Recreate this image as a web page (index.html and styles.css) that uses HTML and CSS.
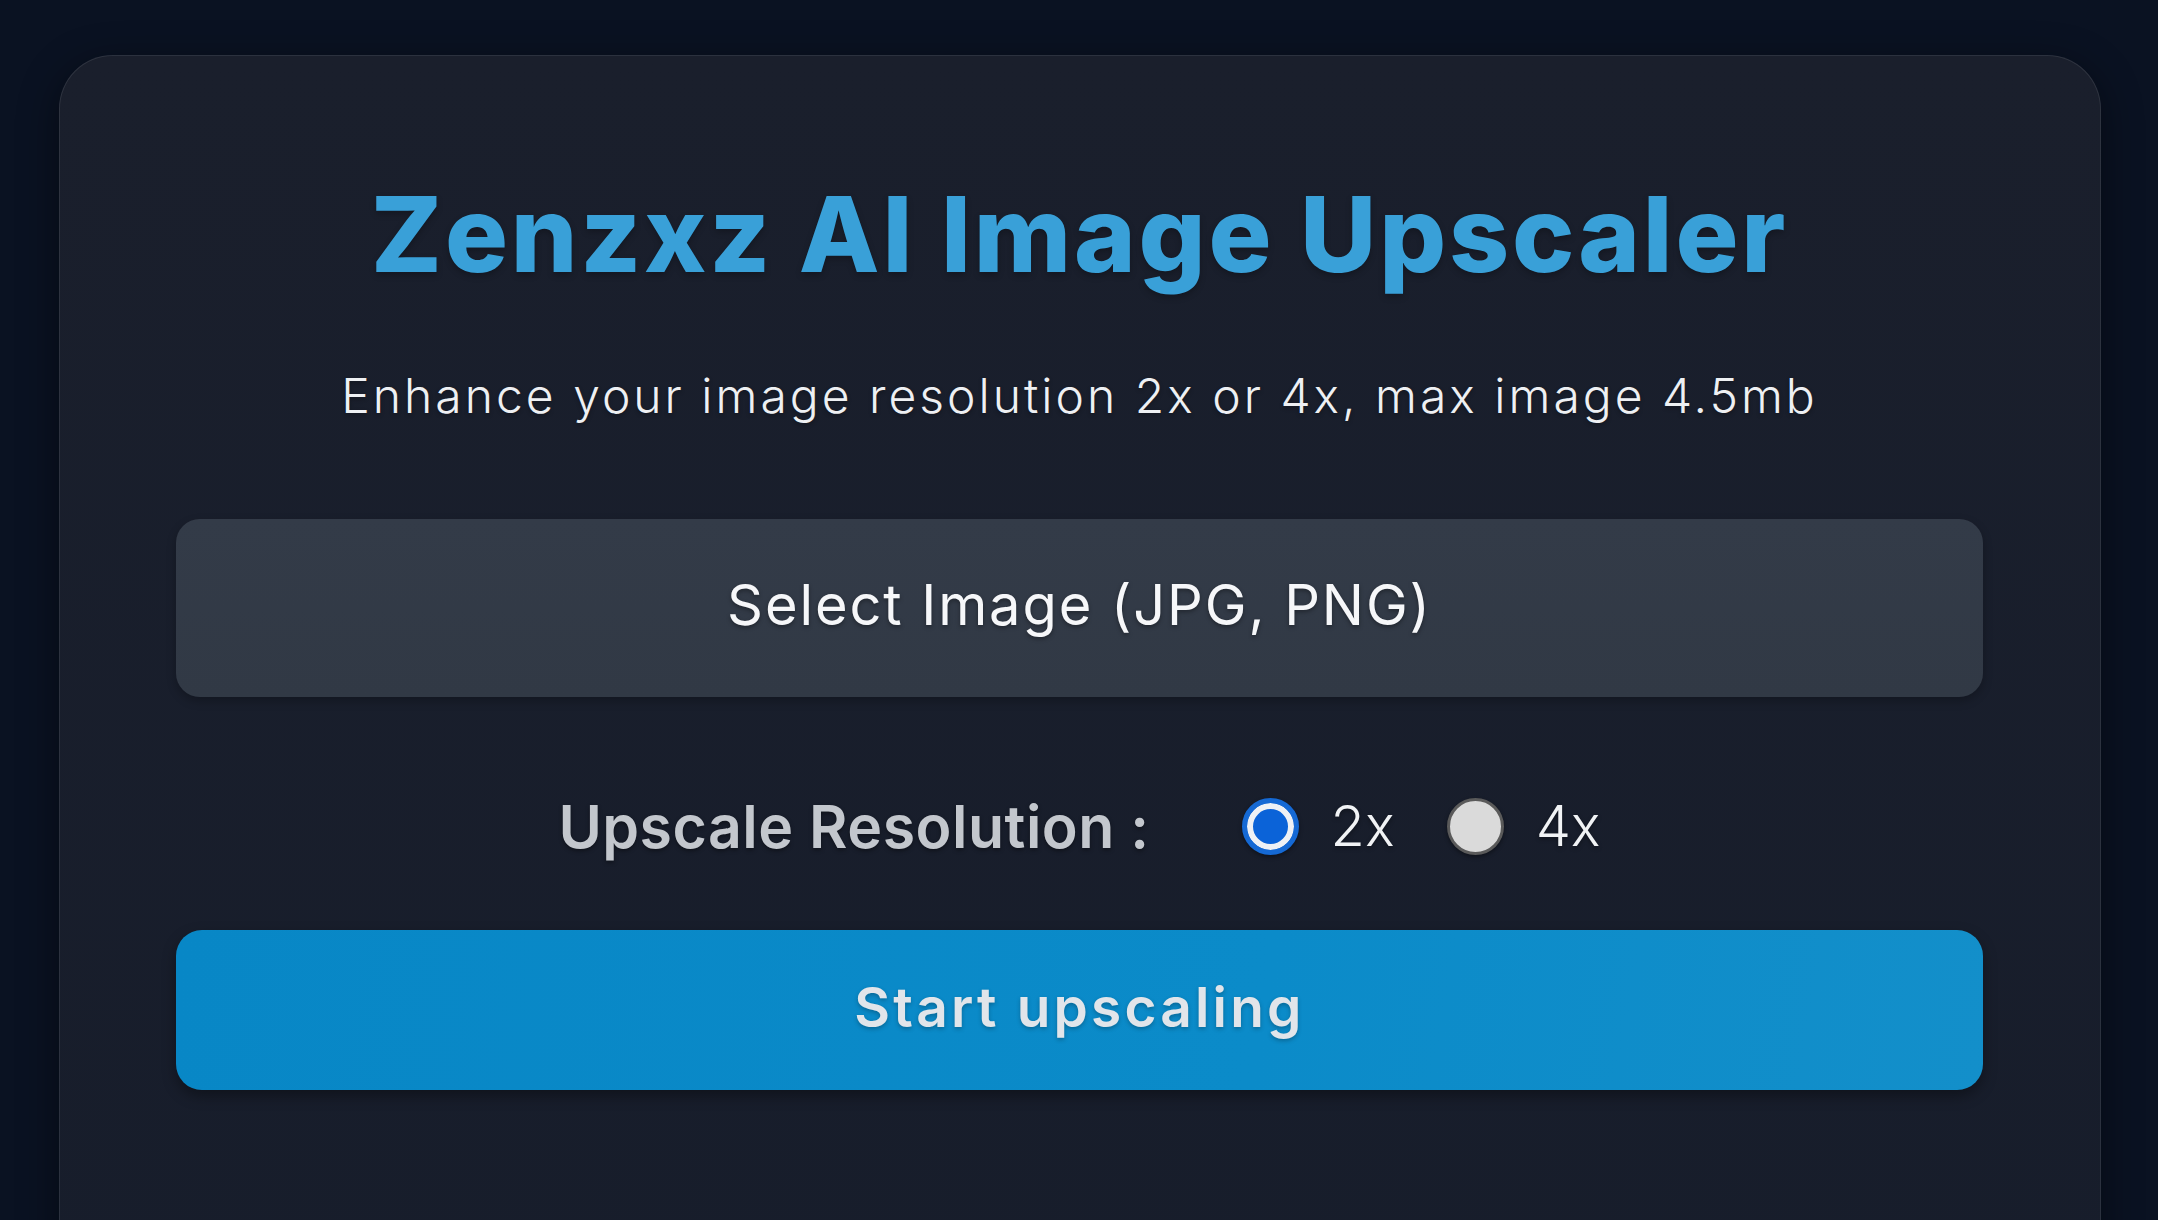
FILE: index.html
```html
<!DOCTYPE html>
<html lang="en">
<head>
<meta charset="utf-8">
<title>Zenzxz AI Image Upscaler</title>
<link rel="stylesheet" href="styles.css">
</head>
<body>
<main class="card">
  <h1 class="title">Zenzxz AI Image Upscaler</h1>
  <p class="subtitle">Enhance your image resolution 2x or 4x, max image 4.5mb</p>
  <label class="select-box">
    <span class="select-text">Select Image (JPG, PNG)</span>
  </label>
  <div class="res-row">
    <span class="res-label">Upscale Resolution :</span>
    <label class="opt">
      <input class="radio" type="radio" name="scale" value="2" checked>
      <span class="opt-text">2x</span>
    </label>
    <label class="opt">
      <input class="radio" type="radio" name="scale" value="4">
      <span class="opt-text">4x</span>
    </label>
  </div>
  <button class="start-btn" type="button">Start upscaling</button>
</main>
</body>
</html>
```

FILE: styles.css
```css
html, body {
  margin: 0;
  padding: 0;
  height: 100%;
  overflow: hidden;
}
body {
  background: #0a1222;
  font-family: "Inter", "Noto Sans", sans-serif;
  color: #f1f3f6;
}
.card {
  margin: 55px 57px 0 59px;
  height: 1300px;
  box-sizing: border-box;
  background: linear-gradient(180deg, #1a1f2c 0%, #171d2b 100%);
  border: 1px solid rgba(255, 255, 255, 0.09);
  border-radius: 54px;
  box-shadow: 0 10px 40px rgba(0, 0, 0, 0.45);
  padding: 115px 117px 0 116px;
  display: flex;
  flex-direction: column;
  align-items: stretch;
}
.title {
  margin: 0;
  text-align: center;
  font-size: 105px;
  line-height: 126px;
  font-weight: 800;
  color: #39a0d8;
  letter-spacing: 2.8px;
  text-shadow: 0 3px 6px rgba(0, 0, 0, 0.25);
}
.subtitle {
  margin: 68px 0 0;
  text-align: center;
  font-size: 48px;
  line-height: 62px;
  font-weight: 300;
  color: #eef0f3;
  letter-spacing: 3px;
  text-shadow: 0 2px 4px rgba(0, 0, 0, 0.3);
}
.select-box {
  margin-top: 92px;
  height: 178px;
  border-radius: 24px;
  background: linear-gradient(180deg, #333b48 0%, #313945 100%);
  box-shadow: 0 4px 10px rgba(0, 0, 0, 0.25);
  display: flex;
  align-items: center;
  justify-content: center;
}
.select-text {
  font-size: 56px;
  font-weight: 400;
  color: #f6f7f9;
  letter-spacing: 1.9px;
  text-shadow: 0 2px 4px rgba(0, 0, 0, 0.35);
  padding-bottom: 6px;
}
.res-row {
  margin-top: 89px;
  height: 80px;
  display: flex;
  align-items: center;
  justify-content: center;
}
.res-label {
  font-size: 59px;
  font-weight: 600;
  color: #c3c7cd;
  margin-right: 92px;
  text-shadow: 0 2px 4px rgba(0, 0, 0, 0.4);
  letter-spacing: 0.5px;
}
.opt {
  display: flex;
  align-items: center;
  gap: 32px;
}
.opt + .opt {
  margin-left: 52px;
}
.radio {
  appearance: none;
  -webkit-appearance: none;
  margin: 0;
  width: 57px;
  height: 57px;
  border-radius: 50%;
  box-sizing: border-box;
  background: #dadada;
  border: 3px solid #5a5a5a;
  box-shadow: 0 2px 4px rgba(0, 0, 0, 0.4);
}
.radio:checked {
  border: 5px solid #1569d4;
  background: #0b63d8;
  box-shadow: inset 0 0 0 6px #eef1f5, 0 2px 4px rgba(0, 0, 0, 0.4);
}
.opt-text {
  font-size: 56px;
  font-weight: 300;
  color: #f1f3f5;
  text-shadow: 0 2px 4px rgba(0, 0, 0, 0.35);
}
.start-btn {
  margin-top: 64px;
  height: 160px;
  border: none;
  border-radius: 26px;
  background: linear-gradient(100deg, #0887c6 0%, #0b8bc9 60%, #138fca 100%);
  box-shadow: 0 6px 14px rgba(0, 0, 0, 0.35);
  font-family: "Inter", "Noto Sans", sans-serif;
  font-size: 55px;
  font-weight: 600;
  color: #e1e5ea;
  letter-spacing: 3.2px;
  text-shadow: 0 2px 4px rgba(0, 0, 0, 0.25);
  padding: 0 0 6px;
}
```
